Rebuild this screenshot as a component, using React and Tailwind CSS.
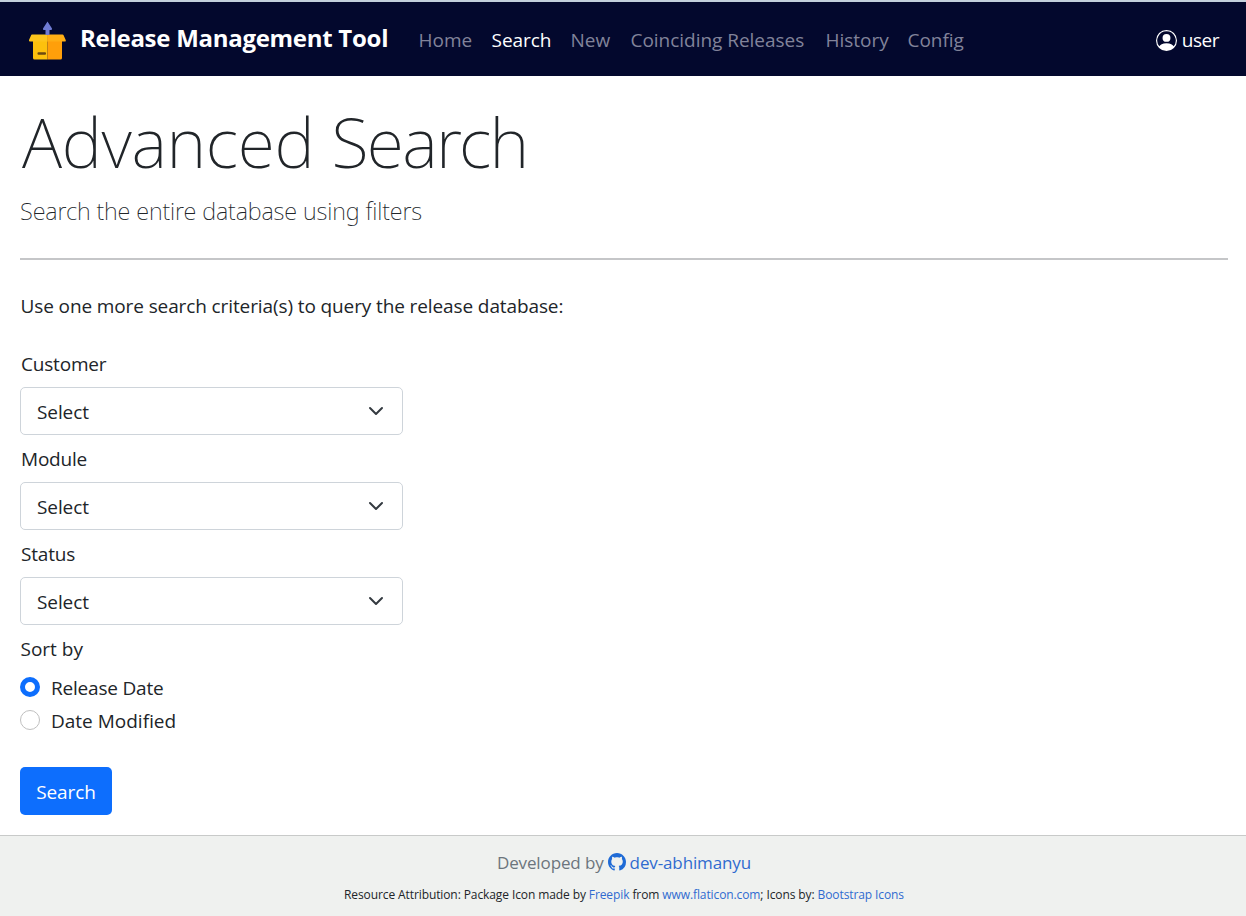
import { BsGithub, BsPersonCircle } from "react-icons/bs";

const links = [
  { label: "Home", width: "w-[53px]" },
  { label: "Search", width: "w-[59px]", active: true },
  { label: "New", width: "w-[40px]" },
  { label: "Coinciding Releases", width: "w-[175px]" },
  { label: "History", width: "w-[62px]" },
  { label: "Config", width: "w-[60px]" },
];

function PackageIcon() {
  return (
    <svg viewBox="0 0 38 40" className="mt-1 h-10 w-[38px] shrink-0">
      <path d="M5 14 H19.5 V38.5 H6.5 Q5 38.5 5 37 Z" fill="#fdc10d" />
      <path d="M19.5 14 H34 V37 Q34 38.5 32.5 38.5 H19.5 Z" fill="#ff9f0a" />
      <path d="M4 13.5 H19.5 V20.5 H2.2 Q0.6 20.5 1 19 L3 14.5 Q3.3 13.5 4 13.5 Z" fill="#fdc51c" />
      <path d="M19.5 13.5 H34.5 Q35.3 13.5 35.6 14.3 L37.7 19 Q38.2 20.5 36.6 20.5 H19.5 Z" fill="#ffae14" />
      <path d="M19.5 0.5 L24 7.5 Q24.4 9 22.8 9 H21.5 V14 H17.5 V9 H16 Q14.6 9 15 7.5 Z" fill="#6f7bd3" />
      <rect x="9.5" y="31.3" width="8.5" height="2.4" rx="1" fill="#6b4a12" />
    </svg>
  );
}

function SelectField({ label }) {
  return (
    <div className="h-[95px]">
      <div className="h-[38px] pl-px leading-[30px] tracking-[-0.2px]">{label}</div>
      <button className="flex h-12 w-[383px] items-center justify-between rounded-[5px] border border-[#ced4da] bg-white pr-[18px] pl-4 text-left text-[#212529]">
        <span className="pt-[2px] tracking-[-0.1px]">Select</span>
        <svg viewBox="0 0 16 16" className="h-4 w-4" fill="none" stroke="#343a40" strokeWidth="2" strokeLinecap="round" strokeLinejoin="round">
          <path d="M2 5l6 6 6-6" />
        </svg>
      </button>
    </div>
  );
}

export default function App() {
  return (
    <div className="flex h-[916px] w-[1246px] flex-col overflow-hidden bg-white font-['Open_Sans',sans-serif] text-[19px] text-[#212529]">
      <header className="flex h-[76px] shrink-0 items-center border-t-2 border-[#c3d0dc] bg-[#03082d] pr-[27px] pl-[28px] text-white">
        <PackageIcon />
        <div className="ml-[14px] w-[308px] pb-[2px] text-[24px] font-bold tracking-[-0.28px] whitespace-nowrap">Release Management Tool</div>
        <nav className="ml-[30.5px] flex gap-5 pt-[3px] tracking-[-0.03px] whitespace-nowrap">
          {links.map((l) => (
            <a key={l.label} className={`${l.width} ${l.active ? "text-white" : "text-[#81839a]"}`}>{l.label}</a>
          ))}
        </nav>
        <div className="ml-auto flex items-center gap-[5px] pt-[2px]">
          <BsPersonCircle className="h-[21px] w-[21px]" />
          <span className="tracking-[-0.5px]">user</span>
        </div>
      </header>

      <main className="h-[759px] shrink-0 pr-[18px] pl-5">
        <h1 className="pt-[24px] pl-[2px] font-['Noto_Sans',sans-serif] text-[68px] leading-[84px] font-extralight tracking-[-0.35px] whitespace-nowrap">
          Advanced <span className="tracking-[-1.7px]">Search</span>
        </h1>
        <p className="mt-[11px] font-['Noto_Sans',sans-serif] text-[23.5px] leading-[32px] font-extralight tracking-[-0.12px]">Search the entire database using filters</p>
        <hr className="mt-[31px] border-t-2 border-[#c5c6c8]" />
        <p className="mt-[31px] pl-[0.5px] leading-[30px] tracking-[-0.11px]">Use one more search criteria(s) to query the release database:</p>
        <form className="mt-7">
          <SelectField label="Customer" />
          <SelectField label="Module" />
          <SelectField label="Status" />
          <div className="h-[38px] pl-[0.5px] leading-[30px]">Sort by</div>
          <label className="flex h-[33px] items-start gap-[11px] leading-[32px]">
            <span className="mt-[5px] h-5 w-5 rounded-full border-[5px] border-[#0d6efd] bg-white" />
            <span className="tracking-[-0.2px]">Release Date</span>
          </label>
          <label className="flex h-[33px] items-start gap-[11px] leading-[32px]">
            <span className="mt-[5px] h-5 w-5 rounded-full border border-[#bfbfbf] bg-white" />
            <span>Date Modified</span>
          </label>
          <button className="mt-[29px] h-12 w-[92px] rounded-[5px] bg-[#0d6efd] pt-[2px] tracking-[-0.1px] text-white">Search</button>
        </form>
      </main>

      <footer className="h-[81px] border-t border-[#c8cac9] bg-[#eff1ef] text-center whitespace-nowrap">
        <div className="flex items-center justify-center gap-1 pt-[12px] pl-[2px] text-[17px] leading-[30px] tracking-[-0.12px] text-[#6c757d]">
          Developed by
          <BsGithub className="mb-[2px] h-[18px] w-[18px] text-[#1f6bd6]" />
          <a className="text-[#2f6bd0]">dev-abhimanyu</a>
        </div>
        <div className="mt-[7px] pl-[2px] text-[12px] leading-[20px] tracking-[-0.1px] text-[#212529]">
          Resource Attribution: Package Icon made by <a className="text-[#2f6bd0]">Freepik</a> from <a className="text-[#2f6bd0]">www.flaticon.com</a>; Icons by: <a className="text-[#2f6bd0]">Bootstrap Icons</a>
        </div>
      </footer>
    </div>
  );
}
